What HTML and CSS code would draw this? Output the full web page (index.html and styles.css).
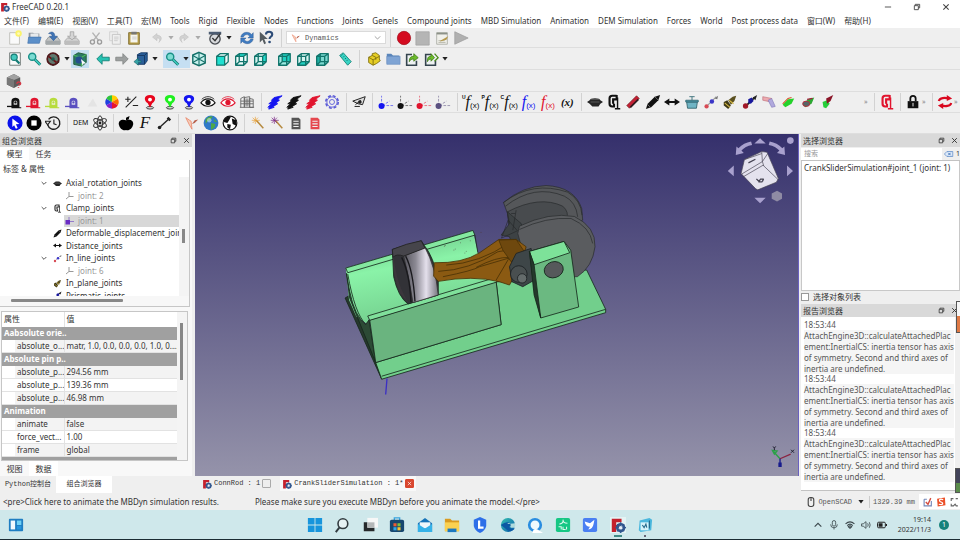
FILE: index.html
```html
<!DOCTYPE html>
<html lang="zh-CN">
<head>
<meta charset="utf-8">
<title>FreeCAD 0.20.1</title>
<link rel="stylesheet" href="styles.css">
</head>
<body>
<svg class="defs" aria-hidden="true">
<defs>
<linearGradient id="silver" x1="0" x2="1"><stop offset="0" stop-color="#55545c"/><stop offset=".35" stop-color="#8c8a94"/><stop offset=".65" stop-color="#e4e0ec"/><stop offset="1" stop-color="#77757f"/></linearGradient>
<linearGradient id="bore" x1="0" y1="0" x2=".3" y2="1"><stop offset="0" stop-color="#5fae78"/><stop offset=".45" stop-color="#8af3a8"/><stop offset="1" stop-color="#74cf8e"/></linearGradient>
<linearGradient id="edgeg" x1="0" y1="0" x2="1" y2="1"><stop offset="0" stop-color="#35c1b0"/><stop offset="1" stop-color="#0b5cad"/></linearGradient>
<symbol id="fc" viewBox="0 0 18 18"><path d="M2 2h11v4H7v3h4v3H7v5H2z" fill="#c4202c"/><circle cx="12" cy="12" r="4" fill="none" stroke="#31578f" stroke-width="2.6"/><path d="M12 6v12M6 12h12M8 8l8 8M16 8l-8 8" stroke="#31578f" stroke-width="1.4"/><circle cx="12" cy="12" r="2" fill="#e8eef6"/></symbol>
<symbol id="new" viewBox="0 0 18 18"><path d="M3 3h11v13H3z" fill="#fafafa" stroke="#bdbdb8"/><circle cx="13" cy="4" r="3.6" fill="#fbf36a"/><circle cx="13" cy="4" r="1.6" fill="#fffbb8"/></symbol>
<symbol id="open" viewBox="0 0 18 18"><path d="M3 3h5l1 1h6v9H3z" fill="#8f959c"/><path d="M5 4h9v6H5z" fill="#e7eaec"/><path d="M3 8h14l-2 7H2z" fill="#5b8fc9" stroke="#3e70aa" stroke-width=".7"/></symbol>
<symbol id="save" viewBox="0 0 18 18"><path d="M4 8h10l3 4v4H1v-4z" fill="#c3c6c6" stroke="#85898a" stroke-width=".8"/><path d="M1 12h16v4H1z" fill="#a3a8aa"/><path d="M4 4c3-3 7-2 7 3h3l-4.500 5L5 7h3c0-2-1-3-4-3z" fill="#3f73b5" stroke="#2a558d" stroke-width=".6"/></symbol>
<symbol id="saveas" viewBox="0 0 18 18"><path d="M4 9h10l3 3v4H1v-4z" fill="#d4d4d4" stroke="#999" stroke-width=".8"/><path d="M1 12h16v4H1z" fill="#bdbdbd"/><path d="M7 2h4v5h3l-5 4-5-4h3z" fill="#d5d5d5" stroke="#9a9a9a" stroke-width=".8"/></symbol>
<symbol id="cut" viewBox="0 0 18 18"><path d="M5 3l7 9M13 3l-7 9" stroke="#b3b3b3" stroke-width="1.6"/><circle cx="5" cy="13.500" r="2.300" fill="none" stroke="#9b9b9b" stroke-width="1.5"/><circle cx="13" cy="13.500" r="2.300" fill="none" stroke="#9b9b9b" stroke-width="1.5"/></symbol>
<symbol id="copy" viewBox="0 0 18 18"><path d="M3 2h9v10H3z" fill="#efefef" stroke="#d0d0d0"/><path d="M6 5h9v11H6z" fill="#efefef" stroke="#c4c4c4"/><path d="M8 8h5M8 10h5M8 12h4" stroke="#c9c9c9"/></symbol>
<symbol id="paste" viewBox="0 0 18 18"><path d="M3 3h12v13H3z" fill="#b9a04c" stroke="#7f6c2e"/><path d="M5 5h8v9H5z" fill="#f5f5f0"/><path d="M6 2h6v3H6z" fill="#777"/><path d="M7 8h5M7 10h5" stroke="#c9c9c9"/></symbol>
<symbol id="undo" viewBox="0 0 18 18"><path d="M9 4L4 8l5 4v-3c3 0 4 2 2 5 4-3 4-8-2-8z" fill="#d2d2d2" stroke="#bdbdbd" stroke-width=".6"/></symbol>
<symbol id="redo" viewBox="0 0 18 18"><path d="M9 4l5 4-5 4V9c-3 0-4 2-2 5-4-3-4-8 2-8z" fill="#d2d2d2" stroke="#bdbdbd" stroke-width=".6"/></symbol>
<symbol id="edit" viewBox="0 0 18 18"><path d="M2 3h14v5l-3 8H6L2 9z" fill="#e8e8e8"/><circle cx="9" cy="10" r="5.800" fill="#d8dadd" stroke="#4a4e54" stroke-width="1.500"/><path d="M2 2h14v3H2z" fill="#4c5c72"/><path d="M6 9l3 3 6-8" stroke="#333" stroke-width="1.500" fill="none"/></symbol>
<symbol id="refresh" viewBox="0 0 18 18"><path d="M2 8c1-6 9-7 12-3l2-2v6h-6l2-2C10 4 6 5 5 8zM16 10c-1 6-9 7-12 3l-2 2V9h6l-2 2c2 3 6 2 7-1z" fill="#3f7cc2" stroke="#28558e" stroke-width=".5"/></symbol>
<symbol id="whats" viewBox="0 0 18 18"><path d="M2 2v12l3-3 2 5 2-1-2-5h4z" fill="#555c60"/><path d="M9 5c0-4 7-4 7 0 0 3-3 2-3 5" fill="none" stroke="#2d4c77" stroke-width="2.400"/><circle cx="13" cy="13.500" r="1.500" fill="#2d4c77"/></symbol>
<symbol id="rec" viewBox="0 0 18 18"><circle cx="9" cy="9" r="7.500" fill="#d40b20" stroke="#a30d1b" stroke-width=".8"/></symbol>
<symbol id="stop" viewBox="0 0 18 18"><path d="M1 2h15v15H1z" fill="#b5b5b5" stroke="#a2a2a2" stroke-width=".8"/></symbol>
<symbol id="macro" viewBox="0 0 18 18"><path d="M3 3h12v13H3z" fill="#f0f0eb" stroke="#aeb0a8"/><path d="M3 3h12v2H3z" fill="#8c9188"/><path d="M5 12h7M5 14h8" stroke="#b5b5a8"/><path d="M7 12l9-5-2 4-7 2z" fill="#b5994d"/></symbol>
<symbol id="play" viewBox="0 0 18 18"><path d="M2 2l15 7-15 7z" fill="#b0b0b0" stroke="#9d9d9d" stroke-width=".8"/></symbol>
<symbol id="dyn" viewBox="0 0 18 18"><path d="M2 3l6 4 1 9-3-5z" fill="#f6cbb8" stroke="#e87a5a" stroke-width=".8"/><path d="M9 10l3-4 4-1-4 4z" fill="#b8604c"/></symbol>
<symbol id="fit" viewBox="0 0 18 18"><path d="M3 2h12v14H3z" fill="#fafafa" stroke="#68716f"/><circle cx="8" cy="7" r="3.500" fill="#44c9bd" stroke="#177d76" stroke-width="1.300"/><path d="M10 10l4 4" stroke="#177d76" stroke-width="2.500"/></symbol>
<symbol id="zoom" viewBox="0 0 18 18"><circle cx="7" cy="6.500" r="4" fill="#7bdcd3" stroke="#178f87" stroke-width="1.600"/><path d="M10 9.500l6 6" stroke="#127870" stroke-width="3.200"/><path d="M10 9.500l6 6" stroke="#3ed0c3" stroke-width="1.500"/></symbol>
<symbol id="nodraw" viewBox="0 0 18 18"><path d="M3 5l6-3 7 3v8l-7 4-6-4z" fill="#2d3833"/><circle cx="9" cy="9" r="6.500" fill="#61796f" stroke="#50191b" stroke-width="2"/><path d="M4 6l9 7" stroke="#6b1317" stroke-width="2"/><circle cx="9" cy="9" r="2" fill="#1e5c50"/></symbol>
<symbol id="box" viewBox="0 0 18 18"><path d="M2 5l5-3 9 2v9l-5 4-9-2z" fill="#2b7a66" stroke="#1f5a34"/><path d="M2 5l9 2v10M11 7l5-3" stroke="#55cf5a" fill="none"/><circle cx="8" cy="10" r="4" fill="#254e8e"/><path d="M10 9l6 5-3 0-1 3z" fill="#fff"/></symbol>
<symbol id="left" viewBox="0 0 18 18"><path d="M8 3v4h8v4H8v4L2 9z" fill="#27c2b2" stroke="#148278"/></symbol>
<symbol id="right" viewBox="0 0 18 18"><path d="M10 3v4H2v4h8v4l6-6z" fill="#9da09f" stroke="#848786"/></symbol>
<symbol id="link" viewBox="0 0 18 18"><path d="M5 4l4-2h7v9l-3 4H5z" fill="#2a5f99" stroke="#173a66"/><path d="M5 5h8v10M13 5l3-3" stroke="#12325a" fill="none"/><path d="M6 8L1 12l5 4v-3h3v-2H6z" fill="#36a1a5" stroke="#155a60" stroke-width=".6"/></symbol>
<symbol id="c-iso" viewBox="0 0 18 18"><path d="M9 1.500l7 3v9l-7 3-7-3v-9z" fill="#c9f2ee" stroke="#167068" stroke-width="1.600"/><path d="M9 2v14M2 5l14 8M16 5L2 13" stroke="#167068" stroke-width="1.200"/></symbol>
<symbol id="c-base" viewBox="0 0 18 18"><path d="M3 6l4-3h9v9l-4 4H3zM3 6h9v10M12 6l4-3M7 3v9M7 12h9M7 12l-4 4" fill="none" stroke="#12756c" stroke-width="1.500" stroke-linejoin="round"/></symbol>
<symbol id="c-front" viewBox="0 0 18 18"><path d="M3 6l4-3h9v9l-4 4H3z" fill="#eafaf8"/><path d="M3 6h9v10H3z" fill="#1fe0d0"/><path d="M3 6l4-3h9v9l-4 4H3zM3 6h9v10M12 6l4-3" fill="none" stroke="#12756c" stroke-width="1.400"/></symbol>
<symbol id="c-top" viewBox="0 0 18 18"><path d="M3 6l4-3h9v9l-4 4H3z" fill="#eafaf8"/><path d="M3 6l4-3h9l-4 3z" fill="#1fe0d0"/><use href="#c-base"/></symbol>
<symbol id="c-right" viewBox="0 0 18 18"><path d="M3 6l4-3h9v9l-4 4H3z" fill="#d4f4f0"/><path d="M12 6l4-3v9l-4 4z" fill="#1fe0d0"/><use href="#c-base"/></symbol>
<symbol id="c-rear" viewBox="0 0 18 18"><path d="M3 6l4-3h9v9l-4 4H3z" fill="#9deae2"/><path d="M7 3h9v9H7z" fill="#1fd0c0"/><use href="#c-base"/></symbol>
<symbol id="c-bot" viewBox="0 0 18 18"><path d="M3 6l4-3h9v9l-4 4H3z" fill="#d4f4f0"/><path d="M3 16l4-4h9l-4 4z" fill="#1fd0c0"/><use href="#c-base"/></symbol>
<symbol id="c-left" viewBox="0 0 18 18"><path d="M3 6l4-3h9v9l-4 4H3z" fill="#7ad8cf"/><path d="M3 6l4-3v9l-4 4z" fill="#1fb0a4"/><use href="#c-base"/></symbol>
<symbol id="meas" viewBox="0 0 18 18"><path d="M3 5l4-3 9 10-4 4z" fill="#38d3c4" stroke="#168478"/><path d="M6 4l-1 1M8 6L7 7M10 8L9 9M12 10l-1 1" stroke="#0f5f58"/></symbol>
<symbol id="part" viewBox="0 0 18 18"><path d="M3 7l4-2V3l4-1 4 3v4l1 2-4 3-4 2-5-3z" fill="#e5cd24" stroke="#80700d"/><path d="M3 7l5 3 7-4M8 10v6M7 5l4 2v3" fill="none" stroke="#80700d"/></symbol>
<symbol id="folder" viewBox="0 0 18 18"><path d="M2 3h5l2 2h7v9H2z" fill="#5b86ba"/><path d="M2 6h15v9H2z" fill="#7fa4d4" stroke="#6289bc" stroke-width=".6"/></symbol>
<symbol id="exp" viewBox="0 0 18 18"><path d="M9 4H3v12h11v-5" fill="#eef2f2" stroke="#35444e" stroke-width="1.800"/><path d="M6 12c0-5 2-6 5-6V3l5 4.500-5 4V9c-3 0-4 1-5 3z" fill="#6cbb2b" stroke="#37720e" stroke-width=".8"/></symbol>
<symbol id="exp2" viewBox="0 0 18 18"><path d="M9 4H3v12h11v-5" fill="#eef2f2" stroke="#35444e" stroke-width="1.800"/><path d="M5 12c0-5 1-6 4-6V3l4 4.500-4 4V9c-2 0-3 1-4 3z" fill="#6cbb2b" stroke="#37720e" stroke-width=".8"/><path d="M13 3l4 4.500-4 4" fill="none" stroke="#4a8c1a" stroke-width="1.500"/></symbol>
<symbol id="solid" viewBox="0 0 18 18"><path d="M1 5l8-4 7 4v8l-7 4-8-4z" fill="#5c5c5c"/><path d="M1 5l8-4 7 4-7 3z" fill="#a1a1a1"/><path d="M1 5l8 3v9l-8-4z" fill="#777"/><path d="M12 12c1-3 6-2 4 1l-2 1M14 16v1" stroke="#d23846" stroke-width="1.600" fill="none"/></symbol>
<symbol id="arch" viewBox="0 0 18 18"><path d="M0 14h6" stroke="currentColor" stroke-width="1.500"/><path d="M5 15V8c0-5 9-5 9 0v7h2v1H5z" fill="currentColor"/><path d="M7.500 12V9c0-2 4-2 4 0v3z" fill="#f5f5f5" opacity=".85"/><circle cx="9.500" cy="9.500" r="1.300" fill="currentColor"/></symbol>
<symbol id="ghost" viewBox="0 0 18 18"><path d="M4 14l6-9 5 9z" fill="#e4e4e4"/></symbol>
<symbol id="wheel" viewBox="0 0 18 18"><path d="M9 9V1.500a7.500 7.500 0 0 1 6.500 3.750z" fill="#ffcf00"/><path d="M9 9l6.500-3.750a7.500 7.500 0 0 1 0 7.500z" fill="#ff6a00"/><path d="M9 9l6.500 3.750A7.500 7.500 0 0 1 9 16.500z" fill="#e8142c"/><path d="M9 9v7.500a7.500 7.500 0 0 1-6.500-3.750z" fill="#8a1fc9"/><path d="M9 9l-6.500 3.750a7.500 7.500 0 0 1 0-7.500z" fill="#1f3fe0"/><path d="M9 9L2.500 5.250A7.500 7.500 0 0 1 9 1.500z" fill="#2fc33f"/></symbol>
<symbol id="pm" viewBox="0 0 18 18"><path d="M3 15L15 3M5.500 3v6M2.500 6h6M11 13h6" stroke="#222" stroke-width="1.200"/></symbol>
<symbol id="pin" viewBox="0 0 18 18"><ellipse cx="9" cy="15.500" rx="4" ry="1.400" fill="none" stroke="#222"/><path d="M9 1c-7.500 0-7 6.500-2.500 9.500L9 15.500l2.500-5C16 7.500 16.500 1 9 1z" fill="currentColor"/><circle cx="9" cy="6.300" r="2.200" fill="#fff"/></symbol>
<symbol id="eye" viewBox="0 0 18 18"><path d="M1 10c4-6 12-6 16 0-4 5-12 5-16 0z" fill="#fff" stroke="currentColor" stroke-width="1.200"/><path d="M2 6c4-4 10-4 14 0" fill="none" stroke="currentColor" stroke-width=".9"/><circle cx="9" cy="9.500" r="3" fill="currentColor"/></symbol>
<symbol id="bldg" viewBox="0 0 18 18"><path d="M2 15V5l4-2v12M6 15V4l6-1v12M12 15V5l4 1v9zM1 15h16M8 5v9M10 5v9M2 8h14M2 11h14" fill="none" stroke="#666" stroke-width="1"/></symbol>
<symbol id="bolt" viewBox="0 0 18 18"><path d="M8 4l9-2-5 4 2 1-4 3 2 1-5 3 1 1-6 2 1-3-2 1 4-4-3 0 4-3-1-1z" fill="currentColor" stroke="currentColor" stroke-linejoin="round"/></symbol>
<symbol id="gear" viewBox="0 0 18 18"><circle cx="9" cy="9" r="7" fill="none" stroke="#5a5ad8" stroke-width="1.800" stroke-dasharray="3.300 2.200"/><circle cx="9" cy="9" r="5.800" fill="none" stroke="#5a5ad8"/><circle cx="9" cy="9" r="2.800" fill="none" stroke="#5a5ad8"/></symbol>
<symbol id="cam" viewBox="0 0 18 18"><path d="M2 8l14-5-3 9-5-1zM5 12l6-5M4 14h6" fill="#ddd" stroke="#222" stroke-width="1.100"/><circle cx="10" cy="9" r="2" fill="#222"/></symbol>
<symbol id="node" viewBox="0 0 18 18"><path d="M4 13V2M5 13h12M5 13l8-5" stroke="currentColor" stroke-width="1" stroke-dasharray="3 1.500" opacity=".6"/><circle cx="4" cy="13.500" r="3.400" fill="currentColor"/></symbol>
<symbol id="shot" viewBox="0 0 18 18"><path d="M3 7c0-3 12-3 12 0l3 2-3 2-2 3H6L3 11 0 9z" fill="#262626"/><path d="M4 6h10M4 9h10" stroke="#777" stroke-width=".7"/></symbol>
<symbol id="clamp" viewBox="0 0 18 18"><path d="M12 2H7Q4 2 4 5v6q0 3 3 3h2v-3M12 1v5H8v5" fill="none" stroke="currentColor" stroke-width="2.400"/><path d="M13 4v12M10 16.500h6" stroke="currentColor" stroke-width="1.600"/></symbol>
<symbol id="rod" viewBox="0 0 18 18"><path d="M2 13L13 2l3 3L5 16z" fill="#c42035" stroke="#611" stroke-width=".7"/><path d="M6 15l9-9" stroke="#301a1d" stroke-width="2"/></symbol>
<symbol id="pen" viewBox="0 0 18 18"><path d="M1 17l2-6 8-8 6-2-2 6-8 8z" fill="#111"/><path d="M3 12l3 3M11 3l4 4" stroke="#999" stroke-width=".7"/></symbol>
<symbol id="dist" viewBox="0 0 18 18"><path d="M0 9l6-4v3h6V5l6 4-6 4v-3H6v3z" fill="#111"/></symbol>
<symbol id="pot" viewBox="0 0 18 18"><path d="M3 9h12l-1 7H4z" fill="#6fb4c4" stroke="#34646f"/><path d="M2 7h14v2H2zM9 3v4M6 3h6" fill="#4896a8" stroke="#356b77"/></symbol>
<symbol id="inl" viewBox="0 0 18 18"><path d="M4 14L15 3" stroke="#999" stroke-width="1.300"/><circle cx="4" cy="14" r="2.400" fill="#d84a55"/><circle cx="10" cy="8.500" r="2.500" fill="#3b36c8"/><path d="M13 5l4-3-1 4z" fill="#777"/></symbol>
<symbol id="inp" viewBox="0 0 18 18"><path d="M2 9l4-2 4 6-3 4-5-4z" fill="#403a17"/><path d="M7 7l5-4 4-1-2 6-4 4z" fill="#5a5020"/><path d="M3 10l6 5M8 7l5 4" stroke="#d6b945" stroke-width="1.200"/></symbol>
<symbol id="pris" viewBox="0 0 18 18"><path d="M4 14L14 4" stroke="#222" stroke-width="2"/><circle cx="4" cy="13.500" r="3" fill="#a11828"/><path d="M7 6l4-2 2 4-3 3-3-1z" fill="#18189c"/><path d="M12 4l5-3-2 6z" fill="#222"/></symbol>
<symbol id="rev" viewBox="0 0 18 18"><path d="M2 3l10 2-1 4L2 7z" fill="#ecaab0" stroke="#b95d68" stroke-width=".6"/><path d="M8 7l4-2 4 9-4 1z" fill="#b0a9dd" stroke="#756cb2" stroke-width=".6"/></symbol>
<symbol id="g1" viewBox="0 0 18 18"><path d="M3 12l6-6 7-1-3 6-7 4z" fill="#25d22b"/><path d="M3 11l6-6 4-1" fill="none" stroke="#d4582c" stroke-width="1.200"/></symbol>
<symbol id="g2" viewBox="0 0 18 18"><path d="M3 12l6-6 7-2-3 7-7 4z" fill="#2ba933"/><ellipse cx="7" cy="11" rx="4" ry="3" fill="#566" stroke="#c1273a"/><path d="M8 6l6-1" stroke="#a31e3a" stroke-width="1.500"/></symbol>
<symbol id="g3" viewBox="0 0 18 18"><path d="M4 9l5-2 3 4-4 5-3-1z" fill="#26ce3a"/><path d="M8 5l8-4-3 7-4 3z" fill="#8b1528"/></symbol>
<symbol id="lock" viewBox="0 0 18 18"><path d="M6 8V5c0-4 6-4 6 0v3" fill="none" stroke="#111" stroke-width="2"/><path d="M3 8h12v8H3z" fill="#111"/><path d="M9 10v4" stroke="#fff"/></symbol>
<symbol id="loop" viewBox="0 0 18 18"><path d="M2 8c1-4 7-4 11-3M16 10c-1 4-7 4-11 3" fill="none" stroke="#d9081f" stroke-width="2.400"/><path d="M11 1l6 4-6 3zM7 17l-6-4 6-3z" fill="#d9081f"/></symbol>
<symbol id="bplay" viewBox="0 0 18 18"><circle cx="9" cy="9" r="8.500" fill="#0a12ec"/><path d="M6 4l8 6-4 .5 2 4-2 1-2-4-2 2z" fill="#fff"/></symbol>
<symbol id="bstop" viewBox="0 0 18 18"><circle cx="9" cy="9" r="8.500" fill="#000"/><path d="M6 6h6v6H6z" fill="#fff"/></symbol>
<symbol id="hist" viewBox="0 0 18 18"><path d="M4 5a7 7 0 1 1-1 6" fill="none" stroke="#222" stroke-width="1.500"/><path d="M0 7l3 4 3-4zM10 5v5l3 1" fill="none" stroke="#222" stroke-width="1.300"/></symbol>
<symbol id="atom" viewBox="0 0 18 18"><g fill="none" stroke="#333" stroke-width="1.100"><ellipse cx="9" cy="9" rx="8" ry="3" transform="rotate(30 9 9)"/><ellipse cx="9" cy="9" rx="8" ry="3" transform="rotate(90 9 9)"/><ellipse cx="9" cy="9" rx="8" ry="3" transform="rotate(150 9 9)"/></g><circle cx="9" cy="9" r="1.600" fill="#222"/></symbol>
<symbol id="apple" viewBox="0 0 18 18"><path d="M9 6c4-2 9 0 8 5-1 4-4 7-8 6-4 1-7-2-8-6-1-5 4-7 8-5z" fill="#000"/><path d="M9 6V3l4-2-1 4z" fill="#000"/></symbol>
<symbol id="bone" viewBox="0 0 18 18"><path d="M3 15L15 4" stroke="#222" stroke-width="1.600"/><circle cx="4" cy="14" r="2" fill="#222"/><path d="M12 4l2-2 3 3-2 2z" fill="#222"/></symbol>
<symbol id="earth" viewBox="0 0 18 18"><circle cx="9" cy="9" r="8.300" fill="#2f79c9"/><path d="M3 5c3-4 7-4 8-3L8 6 5 7l-2 3zM9 9l5 1-1 4-4 3zM12 4l4 4-3 0z" fill="#4da748"/><circle cx="7" cy="6" r="2.500" fill="#d6ecf4" opacity=".55"/></symbol>
<symbol id="globe" viewBox="0 0 18 18"><circle cx="9" cy="9" r="7.700" fill="#fff" stroke="#111" stroke-width="1.300"/><path d="M2 6c2-4 5-5 8-4L8 6 6 9 2 8zM6 10l4 1-1 5-3-2zM11 4l5 2 0 6-4-2z" fill="#111"/></symbol>
<symbol id="wand" viewBox="0 0 18 18"><path d="M7 6l8 9" stroke="#b58a40" stroke-width="1.700"/><path d="M6 2v8M2 6h9M3 3l6 6M9 3L3 9" stroke="currentColor" stroke-width=".8"/></symbol>
<symbol id="calc" viewBox="0 0 18 18"><path d="M4 3h8l2 2v11H4z" fill="currentColor"/><path d="M6 7h6M6 10h6M6 13h6" stroke="#eee" stroke-width="1.200"/></symbol>
<symbol id="axis" viewBox="0 0 18 18"><path d="M8 2v9l-6 5M8 11h9" fill="none" stroke="#8d8d8d" stroke-width="1.800"/></symbol>
<symbol id="axisb" viewBox="0 0 18 18"><path d="M8 2v9M8 11h10" fill="none" stroke="#8d70c9" stroke-width="1.800"/><path d="M1 8h9v9H1z" fill="#6a2cc4"/></symbol>
<symbol id="restore" viewBox="0 0 18 18"><path d="M5 6V3h10v8h-3M3 6h9v9H3z" fill="none" stroke="currentColor" stroke-width="2"/></symbol>
<symbol id="close" viewBox="0 0 18 18"><path d="M3 3l12 12M15 3L3 15" stroke="currentColor" stroke-width="2.400"/></symbol>
</defs>
</svg>

<header class="title"><svg class="appi"><use href="#fc"/></svg><span>FreeCAD 0.20.1</span>
<div class="winb"><button aria-label="Minimize"><svg viewBox="0 0 18 18"><path d="M2 9h14" stroke="#444" stroke-width="2"/></svg></button><button aria-label="Restore"><svg><use href="#restore"/></svg></button><button aria-label="Close"><svg><use href="#close"/></svg></button></div></header>
<nav class="menu"><button>文件(F)</button><button>编辑(E)</button><button>视图(V)</button><button>工具(T)</button><button>宏(M)</button><button>Tools</button><button>Rigid</button><button>Flexible</button><button>Nodes</button><button>Functions</button><button>Joints</button><button>Genels</button><button>Compound joints</button><button>MBD Simulation</button><button>Animation</button><button>DEM Simulation</button><button>Forces</button><button>World</button><button>Post process data</button><button>窗口(W)</button><button>帮助(H)</button></nav>

<div class="tools">
<div class="row">
<div class="g n4"><button aria-label="New"><svg><use href="#new"/></svg></button><button aria-label="Open"><svg><use href="#open"/></svg></button><button aria-label="Save"><svg><use href="#save"/></svg></button><button aria-label="Save as"><svg><use href="#saveas"/></svg></button></div><i class="s4"></i>
<div class="g n3"><button aria-label="Cut"><svg><use href="#cut"/></svg></button><button aria-label="Copy"><svg><use href="#copy"/></svg></button><button aria-label="Paste"><svg><use href="#paste"/></svg></button></div><i class="s4"></i>
<div class="g"><button aria-label="Undo"><svg><use href="#undo"/></svg></button><b class="dd dim"></b><button aria-label="Redo"><svg><use href="#redo"/></svg></button><b class="dd dim"></b></div><i class="s4"></i>
<div class="g"><button aria-label="Edit mode"><svg><use href="#edit"/></svg></button><b class="dd"></b></div><i class="s4"></i>
<div class="g n2"><button aria-label="Refresh"><svg><use href="#refresh"/></svg></button><button aria-label="What's this"><svg><use href="#whats"/></svg></button></div><i class="s10 ln"></i>
<div class="combo"><svg><use href="#dyn"/></svg><select aria-label="Workbench"><option>Dynamics</option></select><svg class="chev" viewBox="0 0 18 18"><path d="M2 6l7 7 7-7" fill="none" stroke="#888" stroke-width="2"/></svg></div><i class="s8 ln"></i>
<div class="g n4"><button aria-label="Record"><svg><use href="#rec"/></svg></button><button aria-label="Stop"><svg><use href="#stop"/></svg></button><button aria-label="Macros"><svg><use href="#macro"/></svg></button><button aria-label="Play"><svg><use href="#play"/></svg></button></div>
</div>
<div class="row">
<div class="g n2"><button aria-label="Fit all"><svg><use href="#fit"/></svg></button><button aria-label="Fit selection"><svg><use href="#zoom"/></svg></button></div>
<div class="g"><button aria-label="Draw style"><svg><use href="#nodraw"/></svg></button><b class="dd"></b><button class="on" aria-label="Bounding box"><svg><use href="#box"/></svg></button></div><i class="s4"></i>
<div class="g n2"><button aria-label="Back"><svg><use href="#left"/></svg></button><button aria-label="Forward"><svg><use href="#right"/></svg></button></div>
<div class="g"><button aria-label="Linked object"><svg><use href="#link"/></svg></button><b class="dd"></b></div><i class="s4"></i>
<div class="g on"><button aria-label="Zoom"><svg><use href="#zoom"/></svg></button><b class="dd"></b></div>
<div class="g"><button aria-label="Isometric"><svg><use href="#c-iso"/></svg></button></div><i class="s4"></i>
<div class="g n3"><button aria-label="Front"><svg><use href="#c-front"/></svg></button><button aria-label="Top"><svg><use href="#c-top"/></svg></button><button aria-label="Right"><svg><use href="#c-right"/></svg></button></div><i class="s4"></i>
<div class="g n3"><button aria-label="Rear"><svg><use href="#c-rear"/></svg></button><button aria-label="Bottom"><svg><use href="#c-bot"/></svg></button><button aria-label="Left"><svg><use href="#c-left"/></svg></button></div><i class="s4"></i>
<div class="g"><button aria-label="Measure"><svg><use href="#meas"/></svg></button></div><i class="s10 ln"></i>
<div class="g n3"><button aria-label="Part"><svg><use href="#part"/></svg></button><button aria-label="Group"><svg><use href="#folder"/></svg></button><button aria-label="Link"><svg><use href="#exp"/></svg></button></div>
<div class="g"><button aria-label="Link actions"><svg><use href="#exp2"/></svg></button><b class="dd"></b></div>
</div>
<div class="row"><div class="g"><button aria-label="Body"><svg><use href="#solid"/></svg></button></div></div>
<div class="row">
<div class="g n13"><button aria-label="Dummy"><svg><use href="#arch"/></svg></button><button class="red" aria-label="Rigid red"><svg><use href="#arch"/></svg></button><button class="lime" aria-label="Rigid lime"><svg><use href="#arch"/></svg></button><button class="vio" aria-label="Rigid violet"><svg><use href="#arch"/></svg></button><button aria-label="Flexible"><svg><use href="#ghost"/></svg></button><button aria-label="Colors"><svg><use href="#wheel"/></svg></button><button aria-label="Sign"><svg><use href="#pm"/></svg></button><button class="pr" aria-label="Red pin"><svg><use href="#pin"/></svg></button><button class="gr" aria-label="Green pin"><svg><use href="#pin"/></svg></button><button class="bl" aria-label="Blue pin"><svg><use href="#pin"/></svg></button><button aria-label="Show"><svg><use href="#eye"/></svg></button><button class="red" aria-label="Hide"><svg><use href="#eye"/></svg></button><button aria-label="Structure"><svg><use href="#bldg"/></svg></button></div><i class="s8 ln"></i>
<div class="g n4"><button class="bl" aria-label="Beam blue"><svg><use href="#bolt"/></svg></button><button aria-label="Beam black"><svg><use href="#bolt"/></svg></button><button class="red" aria-label="Beam red"><svg><use href="#bolt"/></svg></button><button aria-label="Settings"><svg><use href="#gear"/></svg></button></div><i class="s8 ln"></i>
<div class="g"><button aria-label="Plane"><svg><use href="#cam"/></svg></button></div><i class="s8 ln"></i>
<div class="g n4"><button class="bl" aria-label="Node blue"><svg><use href="#node"/></svg></button><button aria-label="Node black"><svg><use href="#node"/></svg></button><button class="red" aria-label="Node red"><svg><use href="#node"/></svg></button><button class="pu" aria-label="Node violet"><svg><use href="#node"/></svg></button></div><i class="s8 ln"></i>
<div class="g n6 fx"><button><sup>U</sup>f<sub>(x)</sub></button><button><sup>P</sup>f<sub>(x)</sub></button><button><sup>C</sup>f<sub>(x)</sub></button><button class="bl">f<sub>(x)</sub></button><button class="red">f<sub>(x)</sub></button><button class="px">(x)</button></div><i class="s8 ln"></i>
<div class="g n13"><button aria-label="Axial rotation"><svg><use href="#shot"/></svg></button><button aria-label="Clamp"><svg><use href="#clamp"/></svg></button><button aria-label="Rod"><svg><use href="#rod"/></svg></button><button aria-label="Deformable"><svg><use href="#pen"/></svg></button><button aria-label="Distance"><svg><use href="#dist"/></svg></button><button aria-label="Drive"><svg><use href="#pot"/></svg></button><button aria-label="In line"><svg><use href="#inl"/></svg></button><button aria-label="In plane"><svg><use href="#inp"/></svg></button><button aria-label="Prismatic"><svg><use href="#pris"/></svg></button><button aria-label="Revolute hinge"><svg><use href="#rev"/></svg></button><button aria-label="Revolute pin"><svg><use href="#g1"/></svg></button><button aria-label="Revolute rotation"><svg><use href="#g2"/></svg></button><button aria-label="Spherical"><svg><use href="#g3"/></svg></button></div>
<div class="tail"><span class="more">»</span><i class="s8 ln"></i><div class="g"><button class="red" aria-label="Clamp joint"><svg><use href="#clamp"/></svg></button></div><i class="s8 ln"></i><div class="g"><button aria-label="Lock"><svg><use href="#lock"/></svg></button></div><span class="more">»</span><i class="s8 ln"></i><div class="g"><button aria-label="Repeat"><svg><use href="#loop"/></svg></button></div><span class="more">»</span></div>
</div>
<div class="row">
<div class="g n3"><button aria-label="Run"><svg><use href="#bplay"/></svg></button><button aria-label="Halt"><svg><use href="#bstop"/></svg></button><button aria-label="History"><svg><use href="#hist"/></svg></button></div><i class="s8 ln"></i>
<div class="g n2"><button class="dem">DEM</button><button aria-label="Atom"><svg><use href="#atom"/></svg></button></div><i class="s6 ln"></i>
<div class="g n3"><button aria-label="Gravity"><svg><use href="#apple"/></svg></button><button class="force">F</button><button aria-label="Couple"><svg><use href="#bone"/></svg></button></div><i class="s8 ln"></i>
<div class="g n3"><button aria-label="Dynamics"><svg><use href="#dyn"/></svg></button><button aria-label="World"><svg><use href="#earth"/></svg></button><button aria-label="Global frame"><svg><use href="#globe"/></svg></button></div><i class="s8 ln"></i>
<div class="g n4"><button class="or" aria-label="Plot"><svg><use href="#wand"/></svg></button><button class="pp" aria-label="Plot vectors"><svg><use href="#wand"/></svg></button><button class="dk" aria-label="Sheet"><svg><use href="#calc"/></svg></button><button class="rd" aria-label="Red sheet"><svg><use href="#calc"/></svg></button></div>
</div>
</div>

<main>
<aside class="leftc">
<section class="dock"><h2>组合浏览器<span><svg><use href="#restore"/></svg><svg><use href="#close"/></svg></span></h2>
<div class="tabs"><button class="sel">模型</button><button>任务</button></div>
<div class="tree"><div class="th">标签 &amp; 属性</div>
<div class="tv"><ul>
<li><svg class="cv" viewBox="0 0 18 18"><path d="M2 6l7 7 7-7" fill="none" stroke="#555" stroke-width="3"/></svg><svg><use href="#shot"/></svg><span>Axial_rotation_joints</span></li>
<li class="ch"><svg><use href="#axis"/></svg><span>joint: 2</span></li>
<li><svg class="cv" viewBox="0 0 18 18"><path d="M2 6l7 7 7-7" fill="none" stroke="#555" stroke-width="3"/></svg><svg><use href="#clamp"/></svg><span>Clamp_joints</span></li>
<li class="ch act"><svg><use href="#axisb"/></svg><span>joint: 1</span></li>
<li><b class="cv"></b><svg><use href="#pen"/></svg><span>Deformable_displacement_joints</span></li>
<li><b class="cv"></b><svg><use href="#dist"/></svg><span>Distance_joints</span></li>
<li><svg class="cv" viewBox="0 0 18 18"><path d="M2 6l7 7 7-7" fill="none" stroke="#555" stroke-width="3"/></svg><svg><use href="#inl"/></svg><span>In_line_joints</span></li>
<li class="ch"><svg><use href="#axis"/></svg><span>joint: 6</span></li>
<li><b class="cv"></b><svg><use href="#inp"/></svg><span>In_plane_joints</span></li>
<li><b class="cv"></b><svg><use href="#pris"/></svg><span>Prismatic_joints</span></li>
</ul><div class="vs"><i></i></div></div>
<div class="hs"><i></i></div></div>
<div class="props"><table>
<colgroup><col class="c0"><col class="c1"><col></colgroup>
<thead><tr><th colspan="2">属性</th><th>值</th></tr></thead>
<tbody>
<tr class="grp"><td colspan="3">Aabsolute orie..</td></tr>
<tr class="alt"><td></td><td>absolute_o...</td><td>matr, 1.0, 0.0, 0.0, 0.0, 1.0, 0....</td></tr>
<tr class="grp"><td colspan="3">Absolute pin p..</td></tr>
<tr class="alt"><td></td><td>absolute_p...</td><td>294.56 mm</td></tr>
<tr><td></td><td>absolute_p...</td><td>139.36 mm</td></tr>
<tr class="alt"><td></td><td>absolute_p...</td><td>46.98 mm</td></tr>
<tr class="grp"><td colspan="3">Animation</td></tr>
<tr class="alt"><td></td><td>animate</td><td>false</td></tr>
<tr><td></td><td>force_vect...</td><td>1.00</td></tr>
<tr class="alt"><td></td><td>frame</td><td>global</td></tr>
<tr class="grp"><td colspan="3"></td></tr>
</tbody></table><div class="vs pv"><i></i></div></div>
<div class="tabs low"><button>视图</button><button class="sel">数据</button></div>
</section>
<div class="btabs"><button>Python控制台</button><button class="sel">组合浏览器</button></div>
</aside>

<section class="center">
<div class="view">
<svg viewBox="195 134 604 342" preserveAspectRatio="xMidYMid meet" role="img" aria-label="3D view">
<g transform="translate(330 170) scale(.33333)" stroke="#16281c" stroke-width="2.500" stroke-linejoin="round">
<path d="M46 384L60 376 150 605 156 628z" fill="#26382c"/>
<path d="M138 578L515 464 500 335 560 335 640 300 772 300 829 418 829 428 156 628z" fill="#72cf8c"/>
<path d="M156 619L829 418" fill="none"/>
<path d="M48 294L430 181 445 248 500 335 330 400 120 440 112 462 80 440 58 390z" fill="url(#bore)" stroke="none"/>
<path d="M436 195L445 248" fill="none"/>
<path d="M48 294L430 181 436 195 54 308z" fill="#84e8a0"/>
<path d="M50 310L60 385 138 578 118 450 108 463Q75 440 60 365z" fill="#2c4a35"/>
<path d="M54 312Q75 430 108 463" fill="none"/>
<path d="M500 335L515 464 138 578 120 450z" fill="#6ab47f"/>
<path d="M114 438L500 322 502 336 120 451z" fill="#80e09b"/>
<g stroke="#25282b" stroke-width="2">
<path d="M522 97Q580 48 650 46Q735 50 757 115L760 150 700 170 540 180 534 130z" fill="#55575a"/>
<path d="M522 97Q610 30 715 66Q755 90 758 135M528 108Q615 40 705 78Q740 95 745 140" fill="none"/>
<path d="M534 125Q630 75 700 108Q720 125 712 150L560 180 540 170z" fill="#484b4e"/>
<path d="M534 125L575 160 600 240 570 290 540 200 515 195 540 160z" fill="#3d4244"/>
<path d="M570 168Q660 125 735 139Q800 170 797 230Q790 290 744 320L600 320 565 190z" fill="#5a5c5f"/>
<path d="M570 178Q650 140 725 145Q782 170 790 220" fill="none"/>
<path d="M536 150l28 32-48 22zM560 120l-10 60M545 130h12" fill="none"/>
</g>
<path d="M188 238L275 212 284 226Q312 260 326 330L326 375 235 402Q205 380 192 320z" fill="#323237"/>
<path d="M222 258L286 232Q318 290 326 375L250 398Q238 320 222 258z" fill="url(#silver)" stroke="#333"/>
<path d="M228 258Q250 300 256 394M216 262Q240 310 244 397" fill="none" stroke="#19191d" stroke-width="4"/>
<path d="M188 238Q230 220 275 212L286 234 222 258Q200 250 190 262z" fill="#46454b" stroke="#222"/>
<path d="M192 262Q202 350 240 402L210 370Q190 320 190 260z" fill="#3b363c" stroke="none"/>
<g stroke="#4a3206" stroke-width="2.500">
<path d="M314 278Q400 280 450 248L508 208 560 208 590 230 575 280 540 345 510 335Q430 315 326 334L312 318z" fill="#8b5a12"/>
<path d="M326 304Q420 300 505 245L565 235M340 320Q430 302 450 290L545 262M440 292Q500 260 540 262L500 330M350 285Q450 280 540 218" fill="none"/>
<path d="M508 210L560 208 585 245 545 275 520 240z" fill="#6e480e"/>
</g>
<path d="M560 250L605 235 615 330 580 350 548 335 540 290z" fill="#3e4648" stroke="#1c2225"/>
<circle cx="568" cy="312" r="25" fill="#494f50" stroke="#1a2022"/><circle cx="578" cy="325" r="14" fill="#646b6b" stroke="#1a2022"/>
<path d="M600 244L704 214 724 240 748 411 634 444 616 370z" fill="#6bb981"/>
<path d="M600 244L704 214 721 248 614 284z" fill="#7de299"/>
<path d="M600 244L614 284 634 444 614 375z" fill="#25382c"/>
<ellipse cx="673" cy="299" rx="29" ry="24" fill="#56595b" transform="rotate(-18 673 299)"/>
<path d="M172 626L168 674" stroke="#3b2fc4" stroke-width="4"/>
<path d="M345 226h3m24 14h2m18-22h2m15 26h2m10-32h2m30-25h3m-80 50h2m-35-8h2m60 20h2" stroke="#503b3b" stroke-width="2"/>
</g>
<g transform="translate(710 130) scale(.33333)" fill="#a9a1ce">
<path d="M153 24l17 16h-34zM153 219l-17-16h34zM56 122l18-16v32zM252 122l-18-16v32zM80 74l2-25 6 5Q104 38 126 34l3 10Q108 48 97 61l7 7zM228 74l-2-25-6 5Q204 38 182 34l-3 10Q200 48 211 61l-7 7z"/><circle cx="244" cy="31" r="10"/>
<path d="M188 190l16-8 15 8v16l-15 8-16-8z" fill="#8f8ba4"/>
<g stroke="#454352" stroke-width="2" stroke-linejoin="round"><path d="M96 130L106 88 158 64 174 66 208 145 202 156 146 179 140 176z" fill="#e4e2ee"/><path d="M97 132L160 94 176 70M102 140L162 105 207 148M158 64L160 94 164 107M106 88L158 70" fill="none"/><path d="M118 98l21-11" stroke-width="4"/><path d="M142 146l8 8 4-7 9 0-3 7M148 155l12 0" stroke-width="4" fill="none"/></g>
</g>
<g transform="translate(750 300) scale(.33333)" fill="none" stroke-width="4"><path d="M93 477L74 456M70 452l14 2-8 9z" stroke="#2aa146"/><path d="M93 477L125 463" stroke="#8b2340"/><path d="M93 477v22M90 490h6v10H90z" stroke="#171b8c"/><path d="M72 440l4 5 4-5M76 445v6M126 450l9 9M135 450l-9 9" stroke="#202030" stroke-width="3"/></g>
</svg>
</div>
<div class="mdi"><button><svg><use href="#fc"/></svg>ConnRod : 1<em class="x"></em></button><button class="sel"><svg><use href="#fc"/></svg>CrankSliderSimulation : 1*<em class="x hot"><svg><use href="#close"/></svg></em></button></div>
</section>

<aside class="rightc">
<section class="dock selv"><h2>选择浏览器<span><svg><use href="#restore"/></svg><svg><use href="#close"/></svg></span></h2>
<div class="search"><input type="text" placeholder="搜索" aria-label="搜索"><svg viewBox="0 0 24 18"><path d="M1 9l6-6h14v12H7z" fill="#dce9fa" stroke="#4f7fc2" stroke-width="1.600"/><path d="M10 6l6 6M16 6l-6 6" stroke="#356ab0" stroke-width="2"/></svg><small>1</small></div>
<div class="list">CrankSliderSimulation#joint_1 (joint: 1)</div>
<label class="chk"><input type="checkbox">选择对象列表</label></section>
<section class="dock rep"><h2>报告浏览器<span><svg><use href="#restore"/></svg><svg><use href="#close"/></svg></span></h2>
<div class="log">
<time>18:53:44</time><p>AttachEngine3D::calculateAttachedPlac<br>ement:InertialCS: inertia tensor has axis<br>of symmetry. Second and third axes of<br>inertia are undefined.</p>
<time>18:53:44</time><p>AttachEngine3D::calculateAttachedPlac<br>ement:InertialCS: inertia tensor has axis<br>of symmetry. Second and third axes of<br>inertia are undefined.</p>
<time>18:53:44</time><p>AttachEngine3D::calculateAttachedPlac<br>ement:InertialCS: inertia tensor has axis<br>of symmetry. Second and third axes of<br>inertia are undefined.</p>
</div></section>
<i class="edge e1"></i><i class="edge e2"></i>
</aside>
</main>

<footer class="status"><span>&lt;pre&gt;Click here to animate the MBDyn simulation results.</span><span class="second">Please make sure you execute MBDyn before you animate the model.&lt;/pre&gt;</span>
<div class="sr"><button><svg viewBox="0 0 18 18"><rect x="4" y="1" width="10" height="16" rx="4" fill="none" stroke="#444" stroke-width="2"/><path d="M9 2v5" stroke="#444" stroke-width="2"/></svg>OpenSCAD</button><b class="dd"></b><span class="dim">1329.39 mm</span>
<div class="ime"><svg viewBox="0 0 18 18"><path d="M2 4h5M2 4v12h13V7" fill="none" stroke="#7387b8" stroke-width="2"/><path d="M5 9l4 4 5-11" fill="none" stroke="#d44c3e" stroke-width="2.500"/></svg><svg viewBox="0 0 18 18"><path d="M2 3l14-2 1 14-14 2z" fill="#ec4f27"/><path d="M13 5C6 2 4 7 9 9s4 6-4 4" fill="none" stroke="#fff" stroke-width="2.200"/></svg><svg viewBox="0 0 18 18"><path d="M4 7V3h4M12 3h4M4 12v4h4l3-3 2 3h3" fill="none" stroke="#666" stroke-width="2"/></svg></div></div></footer>

<div class="task">
<button aria-label="Widgets"><svg viewBox="0 0 18 18"><rect x="1" y="2" width="16" height="14" rx="1" fill="#1f7ec2"/><path d="M3 4h5v10H3z" fill="#f2fafe"/><path d="M10 4h5v5h-5z" fill="#6fd1f5"/><path d="M10 10h5v4h-5z" fill="#2695dd"/></svg></button>
<div class="apps">
<button aria-label="Start"><svg viewBox="0 0 18 18"><path d="M1 1h7.500v7.500H1zM9.500 1H17v7.500H9.500zM1 9.500h7.500V17H1zM9.500 9.500H17V17H9.500z" fill="#1795dc"/></svg></button>
<button aria-label="Search"><svg viewBox="0 0 18 18"><circle cx="10" cy="7.500" r="5.500" fill="#e6f2f3" stroke="#333c40" stroke-width="1.800"/><path d="M6 12l-4 5" stroke="#333c40" stroke-width="2.200"/></svg></button>
<button aria-label="Task view"><svg viewBox="0 0 18 18"><path d="M6 1h12v11H6z" fill="#f7f7f7"/><path d="M2 6h4v6h8v4H2z" fill="#26292b"/><path d="M6 6h8v6H6z" fill="#b4b7b8"/></svg></button>
<button aria-label="Store"><svg viewBox="0 0 18 18"><path d="M6 4V1h6v3" fill="none" stroke="#3aa3de" stroke-width="1.500"/><rect x="1" y="3" width="16" height="14" rx="2" fill="#17476f"/><path d="M5 7h3.500v3.500H5z" fill="#ee5b32"/><path d="M9.500 7H13v3.500H9.500z" fill="#83bd3b"/><path d="M5 11.500h3.500V15H5z" fill="#31a8e8"/><path d="M9.500 11.500H13V15H9.500z" fill="#f8c431"/></svg></button>
<button aria-label="Mail"><svg viewBox="0 0 18 18"><path d="M1 7l8-6 8 6v10H1z" fill="#1673b8"/><path d="M3 6h12v7H3z" fill="#eef7fb"/><path d="M1 8l8 5 8-5v9H1z" fill="#35b2e8"/></svg></button>
<button aria-label="Files"><svg viewBox="0 0 18 18"><path d="M1 2h6l2 2h8v12H1z" fill="#d99a20"/><path d="M1 6h16v10H1z" fill="#fad151"/><path d="M4 13h10v4H4z" fill="#1c78bf"/></svg></button>
<button aria-label="Guard"><svg viewBox="0 0 18 18"><path d="M9 0l7 3v7q-1 5-7 8-6-3-7-8V3z" fill="#2d6fe8"/><path d="M8 4v8h5" fill="none" stroke="#fff" stroke-width="2.500"/></svg></button>
<button aria-label="Edge"><svg viewBox="0 0 18 18"><circle cx="9" cy="9" r="8" fill="url(#edgeg)"/><path d="M1 9Q9 3 13 9q-2 2-3 1 1 4 7 3-6 6-11 0z" fill="#0c59a4"/><path d="M8 8q4-3 4 1.500Q10 13 17 12V7" fill="#d6f3e7" opacity=".8"/></svg></button>
<button aria-label="Browser"><svg viewBox="0 0 18 18"><circle cx="9" cy="9" r="6.500" fill="#eef8fd" stroke="#2a8de0" stroke-width="3"/><path d="M6 18q1-6 6-4l6 4z" fill="#fff"/></svg></button>
<button aria-label="PDF"><svg viewBox="0 0 18 18"><rect x="1" y="1" width="16" height="16" rx="2" fill="#16c784"/><path d="M5 8q5-1 4-5 0 4 5 4M4 11h3v3M9 11v3h3M13 11v3" fill="none" stroke="#dffaef" stroke-width="1.200"/></svg></button>
<button aria-label="Bird"><svg viewBox="0 0 18 18"><rect x="1" y="1" width="16" height="16" rx="2" fill="#4a7ff2"/><path d="M3 5l6 2 5-4-1 5q-1 6-6 6l2-3q-5 0-6-6z" fill="#fff"/></svg></button>
<button class="run" aria-label="FreeCAD"><svg><use href="#fc"/></svg></button>
<button class="run2" aria-label="Notepad"><svg viewBox="0 0 18 18"><path d="M3 4l11-3 3 2-1 12-12 2-2-2z" fill="#4bb7dd"/><path d="M4 6h9v9H4z" fill="#d5f2fa"/><path d="M6 9l2 3 2-4 1 4M14 4v9" stroke="#276a8c" stroke-width="1.300" fill="none"/></svg></button>
</div>
<div class="tray"><svg viewBox="0 0 18 18"><path d="M3 12l6-6 6 6" fill="none" stroke="#3b474b" stroke-width="2"/></svg><svg viewBox="0 0 18 18"><rect x="6" y="1" width="6" height="10" rx="3" fill="none" stroke="#3b474b" stroke-width="1.500"/><path d="M3 8q0 6 6 6t6-6M9 14v3" fill="none" stroke="#3b474b" stroke-width="1.500"/></svg><svg viewBox="0 0 18 18"><path d="M1 7q8-7 16 0M4 10q5-5 10 0M6 12q3-3 6 0l-3 3z" fill="none" stroke="#3b474b" stroke-width="2"/></svg><svg viewBox="0 0 18 18"><path d="M1 7h3l5-4v12l-5-4H1zM12 6q2 3 0 6M15 4q3 5 0 10" fill="none" stroke="#3b474b" stroke-width="1.500"/></svg><svg viewBox="0 0 18 18"><rect x="1" y="4" width="14" height="10" rx="2" fill="none" stroke="#222" stroke-width="1.800"/><path d="M3 6h7v6H3zM16 7h2v4h-2z" fill="#222"/></svg>
<div class="clock"><time>19:14</time><span>2022/11/3</span></div><b class="badge">1</b></div>
</div>
</body>
</html>
```
FILE: styles.css
```css
* { box-sizing: border-box; }
body {
  margin: 0; height: 100vh; display: flex; flex-direction: column; overflow: hidden;
  background: #efefef; color: #333;
  font: 8px/12px "Noto Sans", "Noto Sans CJK SC", sans-serif;
}
button { border: 0; padding: 0; margin: 0; background: none; color: inherit; font: inherit; white-space: nowrap; }
svg { display: block; flex: none; }
.defs { position: absolute; width: 0; height: 0; }

.title { display: flex; align-items: center; height: 13px; background: #fff; }
.appi { width: 10px; height: 10px; margin-right: 2px; }
.winb { margin-left: auto; display: flex; gap: 21px; padding-right: 10px; }
.winb svg { width: 8px; height: 8px; color: #444; }
.menu { display: flex; gap: 9px; height: 15px; align-items: center; padding-left: 4px; background: #fff; }

.row { display: flex; align-items: center; height: 21px; padding-left: 5px; border-bottom: 1px solid #dedede; color: #111; }
.row:first-child { height: 20px; }
.row:nth-child(2), .row:nth-child(3) { height: 22px; }
.g { display: flex; align-items: center; justify-content: space-around; flex: none; }
.g button { width: 18px; height: 18px; }
.g svg { width: 18px; height: 18px; padding: 1px; }
.n2 { width: 39px; } .n3 { width: 58px; } .n4 { width: 77px; } .n6 { width: 116px; } .n13 { width: 252px; }
.s4, .s6, .s8, .s10 { flex: none; height: 18px; width: 4px; }
.s6 { width: 6px; } .s8 { width: 8px; } .s10 { width: 10px; }
.ln { background: linear-gradient(#d2d2d2, #d2d2d2) center / 1px 100% no-repeat; }
.dd { width: 9px; height: 4px; flex: none; background: #222; clip-path: polygon(2px 0, 8px 0, 5px 4px); }
.dd.dim { background: #aaa; }
.on { background: #c5dff2; }
.combo { display: flex; align-items: center; width: 100px; height: 13px; background: #fff; border: 1px solid #dadada; padding: 0 4px; }
.combo svg { width: 10px; height: 10px; }
.combo .chev { width: 7px; height: 7px; }
.combo select { flex: 1; min-width: 0; appearance: none; border: 0; background: none; padding: 0 4px; color: #555; font: 7px/10px "Liberation Mono", monospace; }
.tail { display: flex; align-items: center; margin-left: auto; }
.more { font-size: 7px; color: #888; width: 6px; }
.red { color: #e1142e; } .lime { color: #b7dc3c; } .vio { color: #5a4fc0; } .bl { color: #1414f0; }
.gr { color: #1ff01f; } .pr { color: #e8051c; } .pu { color: #5a5080; } .or { color: #e8a43c; } .pp { color: #7a2a88; }
.dk { color: #555; } .rd { color: #e5484f; }
.g.fx button { display: flex; align-items: center; justify-content: center; font: italic 16px/18px "Liberation Serif", serif; }
.fx sup { font: bold 5px/5px "Liberation Sans", sans-serif; align-self: flex-start; padding-top: 2px; }
.fx sub { font: 8px/8px "Liberation Sans", sans-serif; align-self: flex-end; padding-bottom: 1px; }
.g.fx .px { font: italic bold 11px/18px "Liberation Serif", serif; }
.dem { font-size: 7px; }
.g .force { font: italic 17px/18px "Liberation Serif", serif; }

main { flex: 1; min-height: 0; display: flex; }
.leftc { width: 192px; flex: none; display: flex; flex-direction: column; margin-right: 3px; }
.leftc .dock { flex: 1; display: flex; flex-direction: column; background: #f8f8f8; min-height: 0; }
h2 { margin: 0; height: 13px; display: flex; align-items: center; padding: 0 2px; background: #d9d9d9; font-weight: 400; font-size: 8px; flex: none; }
h2 span { margin-left: auto; display: flex; gap: 6px; }
h2 svg { width: 7px; height: 7px; color: #333; }
.tabs { display: flex; gap: 0; height: 13px; flex: none; }
.tabs button { width: 29px; }
.tabs .sel, .btabs .sel { background: #fff; }
.tree { display: flex; flex-direction: column; flex: 147 1 0; min-height: 0; margin: 0 2px 3px 0; border-right: 1px solid #c6c6c6; border-bottom: 1px solid #c6c6c6; background: #fff; }
.th { height: 17px; line-height: 18px; padding-left: 3px; flex: none; }
.tv { flex: 1; min-height: 0; overflow: hidden; display: flex; }
.tree ul { margin: 0; padding: 0; list-style: none; width: 179px; height: 125px; overflow: hidden; display: flex; flex-direction: column; flex: none; }
.tree li { flex: 1; display: flex; align-items: center; gap: 4px; padding-left: 41px; white-space: nowrap; }
.tree li svg { width: 9px; height: 9px; }
.tree li .cv { width: 6px; height: 6px; margin-right: 2px; flex: none; }
.tree .ch { margin-left: 64px; padding-left: 1px; color: #999; }
.act { background: #d8d8d8; }
.vs { flex: 1; background: #f4f4f4; padding: 52px 4px 0 3px; }
.vs i { display: block; height: 14px; background: #888; }
.hs { height: 10px; padding: 3px 0 0 11px; flex: none; background: #f7f7f7; }
.hs i { display: block; width: 112px; height: 3px; background: #888; border-radius: 1px; }
.props { flex: 150 1 0; min-height: 0; overflow: hidden; display: flex; margin: 1px 4px 0 1px; border: 1px solid #c6c6c6; background: #fff; }
table { width: 175px; flex: none; align-self: flex-start; table-layout: fixed; border-collapse: collapse; }
.c0 { width: 13px; } .c1 { width: 49px; }
tr { height: 13px; }
thead tr { height: 15px; }
td, th { padding: 0 0 0 2px; text-align: left; font-weight: 400; white-space: nowrap; overflow: hidden; }
tbody td { border-bottom: 1px solid #e2e2e2; }
td:nth-child(3), th:nth-child(2) { padding-left: 2px; border-left: 1px solid #e2e2e2; }
.alt td:not(:first-child) { background: #f3f3f3; }
.grp td { background: #a0a0a0; color: #fff; font-weight: 700; border: 0; }
.pv { padding: 11px 4px 0 3px; }
.pv i { height: 57px; }
.low { height: 15px; }
.btabs { height: 17px; display: flex; flex: none; font: 7px/15px "Liberation Mono", "Noto Sans CJK SC", monospace; }
.btabs button { width: 56px; }

.center { flex: 1; min-width: 0; display: flex; flex-direction: column; }
.view { flex: 1; min-height: 0; background: linear-gradient(#35306c, #9593aa); border-right: 1px solid #6a61c0; }
.view svg { width: 100%; height: 100%; }
.mdi { height: 17px; flex: none; display: flex; align-items: flex-start; padding-left: 5px; gap: 7px; }
.mdi button { display: flex; align-items: center; height: 15px; padding: 0 2px; gap: 2px; font: 7px/15px "Liberation Mono", monospace; }
.mdi svg { width: 10px; height: 10px; }
.mdi .sel { background: #f8f8f8; }
.x { width: 9px; height: 9px; border: 1px solid #aaa; border-radius: 1px; padding: 1px; background: #eee; }
.hot { background: #d9472f; border-color: #d9472f; color: #fff; }
.mdi .x svg { width: 5px; height: 5px; }

.rightc { width: 161px; flex: none; position: relative; display: flex; flex-direction: column; gap: 2px; padding-left: 2px; }
.selv { flex: 168 1 0; min-height: 0; display: flex; flex-direction: column; }
.search { display: flex; align-items: center; height: 14px; flex: none; gap: 2px; border-bottom: 1px solid #c2c2c2; }
.search input { flex: 1; min-width: 0; height: 12px; border: 0; padding: 0 3px; background: #fff; font: inherit; font-size: 7px; }
.search input::placeholder { color: #999; }
.search svg { width: 10px; height: 8px; }
.search small { width: 4px; font-size: 7px; }
.list { flex: 1; background: #fff; border: 1px solid #c8c8c8; border-top: 0; padding: 1px 2px; white-space: nowrap; }
.chk { display: flex; align-items: center; height: 11px; gap: 4px; font-size: 8px; flex: none; }
.chk input { appearance: none; width: 8px; height: 8px; margin: 0; border: 1px solid #999; background: #fff; }
.rep { flex: 187 1 0; min-height: 0; display: flex; flex-direction: column; margin-bottom: 2px; }
.log { flex: 1; min-height: 0; background: #fff; border-bottom: 1px solid #c2c2c2; margin-right: 5px; padding: 3px 0 0 3px; white-space: nowrap; color: #555; }
.log time { display: block; line-height: 10px; }
.log p { margin: 0; line-height: 11px; background: #f5f5f5; width: max-content; }
.edge { position: absolute; right: 0; width: 4px; height: 32px; top: 167px; border: 1px solid #555; border-right: 0; background: linear-gradient(#f6f6f6 45%, #e07a45 45%); }
.e2 { top: 334px; height: 25px; width: 5px; background: linear-gradient(#43445a 60%, #5b8c4c 60%); }

.status { display: flex; align-items: center; height: 17px; flex: none; padding-left: 3px; }
.second { margin-left: 36px; }
.sr { margin-left: auto; display: flex; align-items: center; gap: 4px; font: 7px/12px "Liberation Mono", monospace; color: #555; }
.sr button { display: flex; align-items: center; gap: 2px; }
.sr svg { width: 10px; height: 10px; }
.sr .dim { border-left: 1px solid #ccc; padding-left: 3px; }
.ime { display: flex; gap: 3px; width: 41px; height: 15px; padding-left: 4px; align-items: center; background: #fff; overflow: hidden; }

.task { position: relative; display: flex; align-items: center; justify-content: space-between; height: 30px; flex: none; padding: 0 11px 0 8px; background: #cfe8eb; border-bottom: 1px solid #1b2c33; }
.task > button svg, .apps svg { width: 16px; height: 16px; }
.apps { position: absolute; left: 0; right: 0; margin: auto; width: 347px; display: flex; justify-content: space-between; }
.run, .run2 { position: relative; }
.run { background: #e4f3f4; }
.run::after, .run2::after { content: ""; position: absolute; left: 4px; right: 4px; bottom: -4px; height: 2px; background: #3f8a86; }
.run2::after { left: 7px; right: 7px; background: #667; }
.tray { display: flex; align-items: center; gap: 6px; }
.tray svg { width: 10px; height: 10px; }
.clock { width: 38px; text-align: right; display: flex; flex-direction: column; line-height: 10px; font-size: 7px; }
.badge { width: 10px; height: 10px; border-radius: 5px; background: #16817a; color: #fff; font-size: 7px; line-height: 10px; text-align: center; font-weight: 400; margin-left: 2px; }
```
